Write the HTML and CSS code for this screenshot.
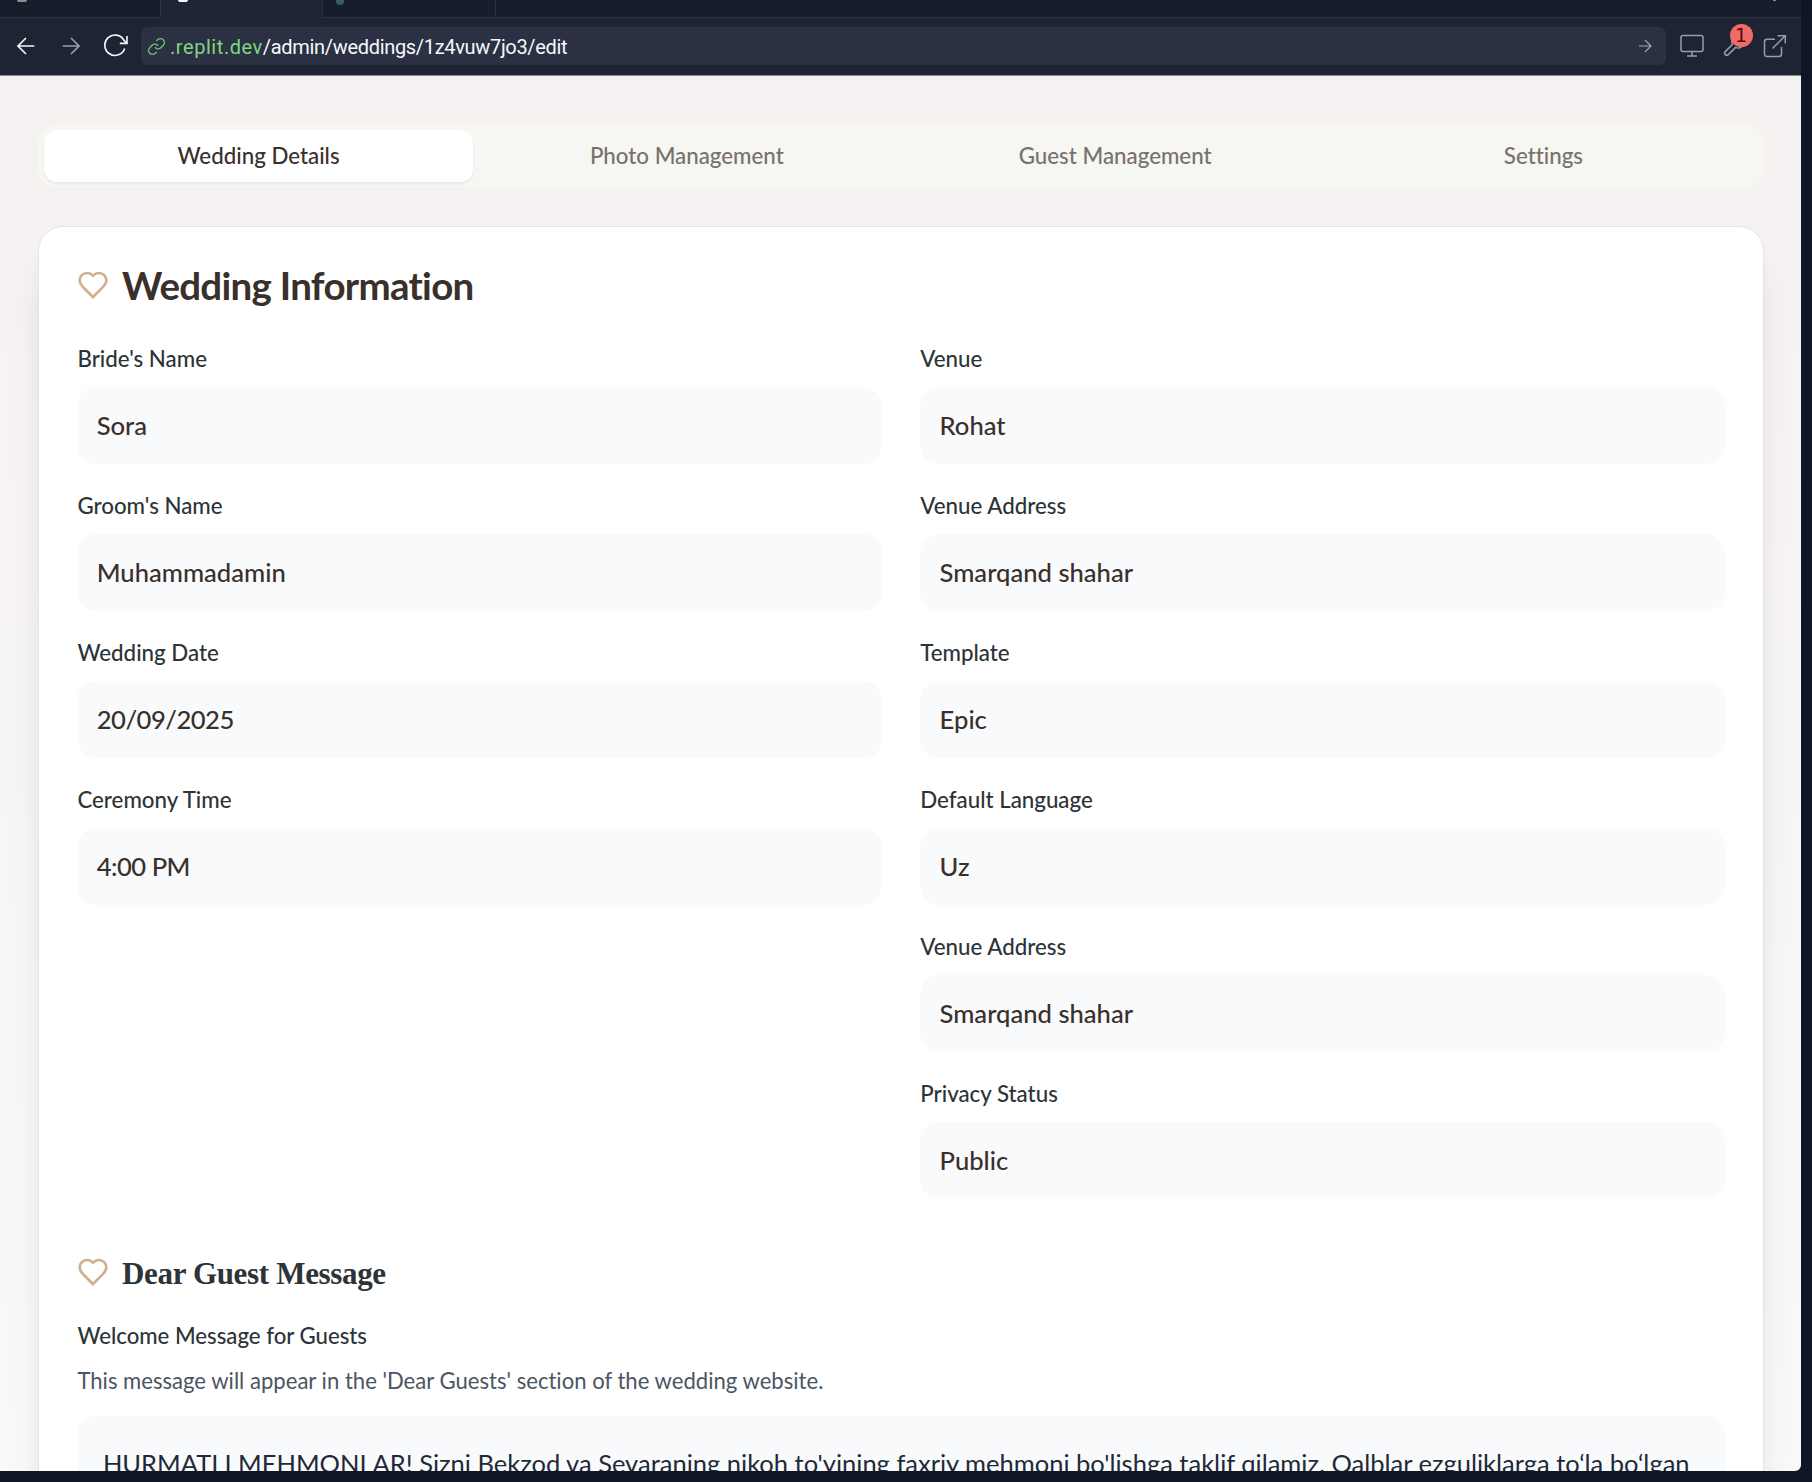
FILE: index.html
```html
<!DOCTYPE html>
<html lang="en">
<head>
<meta charset="utf-8">
<title>Edit wedding</title>
<link rel="stylesheet" href="styles.css">
</head>
<body>
<div class="window">
  <header class="chrome">
    <div class="tabs-row">
      <div class="btab btab-first"><i class="favicon favicon-gray"></i></div>
      <div class="btab btab-active"><i class="favicon favicon-white"></i></div>
      <div class="btab btab-third"><i class="favicon favicon-teal"></i></div>
      <div class="btab btab-rest"><i class="favicon favicon-dot"></i></div>
    </div>
    <div class="toolbar">
      <div class="nav">
        <svg class="back" width="18" height="18" viewBox="0 0 18 18"><path d="M17.3 9H1.2M9 1L1 9l8 8"/></svg>
        <svg class="forward" width="18" height="18" viewBox="0 0 18 18"><path d="M.7 9h16M9 1l8 8-8 8"/></svg>
        <svg class="reload" width="24" height="24" viewBox="0 0 24 24"><path d="M20.7 14.5A10.2 10.2 0 1 1 20 6.3l2.8 2.9M23 2v7.4h-7.2"/></svg>
      </div>
      <div class="url">
        <svg class="link" width="19" height="19" viewBox="0 0 24 24"><path d="M10 13a5 5 0 0 0 7.54.54l3-3a5 5 0 0 0-7.07-7.07l-1.72 1.71"/><path d="M14 11a5 5 0 0 0-7.54-.54l-3 3a5 5 0 0 0 7.07 7.07l1.71-1.71"/></svg>
        <span class="host">.replit.dev</span><span class="path">/admin/weddings/1z4vuw7jo3/edit</span>
        <svg class="go" width="14" height="14" viewBox="0 0 14 14"><path d="M1 7h12M7 1l6 6-6 6"/></svg>
      </div>
      <div class="tools">
        <svg width="24" height="24" viewBox="0 0 24 24"><rect x="1" y="1.5" width="22" height="16" rx="2"/><path d="M12 17.5V22M7 22h10"/></svg>
        <span class="wrench">
          <svg width="24" height="24" viewBox="0 0 24 24"><path d="M14.8 6.3a1 1 0 0 0 0 1.4l1.5 1.5a1 1 0 0 0 1.4 0l3.8-3.8a6 6 0 0 1-8 8l-7.2 7.2a2.1 2.1 0 0 1-3-3l7.2-7.2a6 6 0 0 1 8-8z"/></svg>
          <b class="badge">1</b>
        </span>
        <svg width="24" height="24" viewBox="0 0 24 24"><path d="M12 5.200H4A2.500 2.500 0 0 0 1.500 7.700v12.500A2.500 2.500 0 0 0 4 22.500h12a2.500 2.500 0 0 0 2.500-2.500v-7M9.500 14.500L22 2M14.500 1.700h7.800V9.500"/></svg>
      </div>
    </div>
  </header>

  <main class="page">
    <nav class="tablist">
      <a class="tab tab-on">Wedding Details</a>
      <a class="tab">Photo Management</a>
      <a class="tab">Guest Management</a>
      <a class="tab">Settings</a>
    </nav>

    <section class="card">
      <h2 class="title"><svg class="heart" width="32" height="32" viewBox="0 0 24 24"><path d="M19 14c1.490-1.460 3-3.210 3-5.500A5.500 5.500 0 0 0 16.500 3c-1.760 0-3 .5-4.500 2-1.500-1.500-2.740-2-4.500-2A5.500 5.500 0 0 0 2 8.500c0 2.300 1.500 4.050 3 5.500l7 7Z"/></svg><span>Wedding Information</span></h2>

      <div class="columns">
        <div class="column">
          <div class="field"><label>Bride's Name</label><p>Sora</p></div>
          <div class="field"><label>Groom's Name</label><p>Muhammadamin</p></div>
          <div class="field"><label>Wedding Date</label><p class="numeric">20/09/2025</p></div>
          <div class="field"><label>Ceremony Time</label><p class="numeric">4:00 PM</p></div>
        </div>
        <div class="column">
          <div class="field"><label>Venue</label><p>Rohat</p></div>
          <div class="field"><label>Venue Address</label><p>Smarqand shahar</p></div>
          <div class="field"><label>Template</label><p>Epic</p></div>
          <div class="field"><label>Default Language</label><p>Uz</p></div>
          <div class="field"><label>Venue Address</label><p>Smarqand shahar</p></div>
          <div class="field"><label>Privacy Status</label><p>Public</p></div>
        </div>
      </div>

      <h3 class="subtitle"><svg class="heart" width="32" height="32" viewBox="0 0 24 24"><path d="M19 14c1.490-1.460 3-3.210 3-5.500A5.500 5.500 0 0 0 16.500 3c-1.760 0-3 .5-4.500 2-1.500-1.500-2.740-2-4.500-2A5.500 5.500 0 0 0 2 8.500c0 2.300 1.500 4.050 3 5.500l7 7Z"/></svg><span>Dear Guest Message</span></h3>
      <div class="welcome">Welcome Message for Guests</div>
      <div class="hint">This message will appear in the 'Dear Guests' section of the wedding website.</div>
      <div class="message">HURMATLI MEHMONLAR! Sizni Bekzod va Sevaraning nikoh to'yining faxriy mehmoni bo'lishga taklif qilamiz. Qalblar ezguliklarga to‘la bo‘lgan</div>
    </section>
  </main>
</div>
</body>
</html>
```
FILE: styles.css
```css
* { box-sizing: border-box; }
body {
  margin: 0;
  height: 1482px;
  overflow: hidden;
  background: #0e1525;
  font-family: Lato, sans-serif;
  font-variant-ligatures: none;
}
h2, h3, p { margin: 0; }
svg { fill: none; stroke: currentColor; flex: none; }

.window {
  width: 1801px;
  height: 1471px;
  display: flex;
  flex-direction: column;
  overflow: hidden;
  border-bottom-right-radius: 6px;
}

/* Browser chrome */
.chrome { flex: none; height: 76px; background: #1e2433; border-bottom: 1px solid #85868f; }
.tabs-row { display: flex; height: 18px; }
.btab { background: #181d2b; border-bottom: 1px solid #2b3245; overflow: hidden; }
.btab-first { width: 161px; border-right: 1px solid #2b3245; padding-left: 17px; }
.btab-active { width: 161px; background: #1e2433; border-bottom-color: #1e2433; padding-left: 17px; }
.btab-third { width: 174px; border-left: 1px solid #2b3245; border-right: 1px solid #2b3245; padding-left: 13px; }
.btab-rest { flex: 1; display: flex; justify-content: flex-end; padding-right: 25px; }
.favicon { display: block; width: 10px; height: 2px; border-radius: 0 0 2px 2px; }
.favicon-gray { background: #8b8e96; }
.favicon-white { background: #f5f9fc; }
.favicon-teal { width: 8px; height: 5px; background: #3a5a6b; border-radius: 0 0 4px 4px; }
.favicon-dot { width: 3px; height: 1px; background: #a0a3aa; }

.toolbar { display: flex; align-items: flex-start; padding-top: 9px; color: #9a9da3; }
.nav { width: 141px; height: 38px; display: flex; align-items: center; padding-left: 16.5px; }
.nav svg { stroke-width: 1.6; }
.back, .reload { color: #f5f9fc; }
.forward { margin-left: 27px; }
.reload { margin-left: 24.5px; }
.url {
  width: 1525px;
  height: 38px;
  padding: 0 14px 0 6px;
  display: flex;
  align-items: center;
  background: #2b3043;
  border-radius: 7px;
  font-family: Roboto, sans-serif;
  font-size: 20px;
  line-height: 26px;
  color: #f5f9fc;
}
.link { color: #6cc070; stroke-width: 1.8; margin-right: 4px; }
.host, .path { padding-top: 2px; }
.host { color: #82d581; letter-spacing: 0.56px; }
.path { letter-spacing: -0.32px; }
.go { margin-left: auto; color: #a2a5ab; stroke-width: 1.2; }
.tools { display: flex; align-items: center; height: 38px; padding-left: 14px; gap: 17.5px; stroke-width: 1.5; }
.wrench { position: relative; display: flex; }
.badge {
  position: absolute;
  left: 8px;
  top: -10px;
  width: 23px;
  height: 23px;
  border-radius: 50%;
  background: #ee6c68;
  color: #4f0d0b;
  font: 400 19px/22px "DejaVu Sans", sans-serif;
  text-align: center;
}

/* Page */
.page {
  flex: 1;
  min-height: 0;
  padding: 48px 37.4px 0 38.4px;
  background: linear-gradient(180deg, #f6f1f1 0%, #f6f3f2 22%, #f9f8f6 75%, #faf8f8 100%);
}
.tablist {
  display: grid;
  grid-template-columns: repeat(4, 1fr);
  height: 64px;
  padding: 6px;
  border-radius: 19px;
  background: #f6f6f2;
}
.tab {
  display: flex;
  align-items: center;
  justify-content: center;
  border-radius: 13px;
  color: #78716c;
  font-size: 22.3px;
  font-weight: 500;
  line-height: 32px;
}
.tab-on { background: #fff; color: #3a302b; box-shadow: 0 2px 3px rgba(0, 0, 0, 0.06); }

.card {
  margin-top: 38px;
  height: 1400px;
  padding: 39px 38px;
  border: 1px solid #e5e3e3;
  border-radius: 25px;
  background: #fff;
  box-shadow: 0 32px 40px -8px rgba(0, 0, 0, 0.1), 0 13px 16px -10px rgba(0, 0, 0, 0.1);
}
.heart { color: #d0b08c; stroke-width: 2; }
.title, .subtitle { display: flex; align-items: center; gap: 12.6px; }
.title {
  height: 38px;
  color: #3a302b;
  font-size: 38.5px;
  font-weight: 700;
  line-height: 38px;
  letter-spacing: -0.72px;
}
.subtitle {
  height: 45px;
  margin-top: 50.5px;
  color: #2d3438;
  font: 700 31px/45px "Liberation Serif", serif;
  letter-spacing: -0.33px;
}
.subtitle span { padding-top: 2px; }
.columns {
  display: grid;
  grid-template-columns: 1fr 1fr;
  gap: 38.5px;
  margin-top: 38.8px;
}
.column { display: flex; flex-direction: column; gap: 25.5px; }
.field { display: flex; flex-direction: column; gap: 12.3px; }
.field label, .welcome { color: #2d3438; font-size: 22.3px; font-weight: 500; line-height: 32px; }
.field p {
  height: 77.2px;
  padding: 0 19.3px;
  border-radius: 19px;
  background: #f9fafc;
  color: #3a302b;
  font-size: 25.6px;
  font-weight: 500;
  line-height: 77.6px;
}
.field .numeric { letter-spacing: -0.5px; }
.welcome { margin-top: 25.500px; font-size: 22.2px; }
.hint { margin-top: 13px; color: #4b5563; font-size: 22.1px; line-height: 32px; }
.message {
  height: 200px;
  margin-top: 19px;
  padding: 25.500px;
  border-radius: 19px;
  background: #f9fafc;
  color: #1f2937;
  font-size: 25.5px;
  line-height: 42px;
  white-space: nowrap;
}
```
